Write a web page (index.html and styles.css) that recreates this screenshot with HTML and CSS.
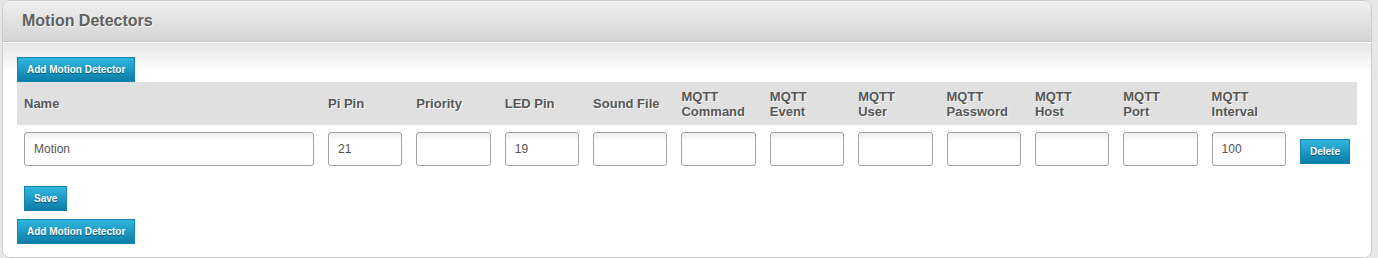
FILE: index.html
```html
<!DOCTYPE html>
<html lang="en">
<head>
    <meta charset="UTF-8">
    <title>Motion Detectors</title>
    <link rel="stylesheet" href="styles.css">
</head>
<body>
    <div class="panel">
        <div class="panel-header">Motion Detectors</div>
        <div class="panel-body">
            <button class="btn">Add Motion Detector</button>

            <table class="detectors">
                <colgroup>
                    <col class="col-name">
                    <col span="11">
                    <col class="col-action">
                </colgroup>
                <thead>
                    <tr>
                        <th>Name</th>
                        <th>Pi Pin</th>
                        <th>Priority</th>
                        <th>LED Pin</th>
                        <th>Sound File</th>
                        <th>MQTT<br>Command</th>
                        <th>MQTT<br>Event</th>
                        <th>MQTT<br>User</th>
                        <th>MQTT<br>Password</th>
                        <th>MQTT<br>Host</th>
                        <th>MQTT<br>Port</th>
                        <th>MQTT<br>Interval</th>
                        <th></th>
                    </tr>
                </thead>
                <tbody>
                    <tr>
                        <td><input type="text" value="Motion"></td>
                        <td><input type="text" value="21"></td>
                        <td><input type="text"></td>
                        <td><input type="text" value="19"></td>
                        <td><input type="text"></td>
                        <td><input type="text"></td>
                        <td><input type="text"></td>
                        <td><input type="text"></td>
                        <td><input type="password"></td>
                        <td><input type="text"></td>
                        <td><input type="text"></td>
                        <td><input type="text" value="100"></td>
                        <td><button class="btn btn-delete">Delete</button></td>
                    </tr>
                </tbody>
            </table>

            <div class="save-row">
                <button class="btn">Save</button>
            </div>
            <button class="btn">Add Motion Detector</button>
        </div>
    </div>
</body>
</html>
```

FILE: styles.css
```css
body {
    font-family: Arial, "Liberation Sans", sans-serif;
    background-color: #e7e7e7;
    margin: 0;
    padding: 0 0 0 2px;
}
.panel {
    width: 1370px;
    box-sizing: border-box;
    background-color: #fff;
    border: 1px solid #cbcbcb;
    border-radius: 8px;
    overflow: hidden;
}
.panel-header {
    height: 40px;
    line-height: 40px;
    padding: 0 19px;
    font-size: 16px;
    font-weight: bold;
    color: #606060;
    text-shadow: 1px 1px 0 #f4f4f4;
    background: linear-gradient(#efefef, #d5d5d5);
    border-bottom: 1px solid #c6c6c6;
}
.panel-body {
    border-top: 1px solid #fff;
    padding: 14px 14px 13px;
    background: linear-gradient(#e6e6e6, #fff 30px);
}
.btn {
    display: inline-block;
    height: 25px;
    padding: 0 9px;
    border: 1px solid #1484ad;
    border-radius: 0;
    background: linear-gradient(#30b7df, #0b7ea8);
    color: #fff;
    font-family: Arial, "Liberation Sans", sans-serif;
    font-size: 10px;
    font-weight: bold;
    text-shadow: 0 1px 1px rgba(0, 0, 0, 0.45);
    cursor: pointer;
    vertical-align: top;
}
table.detectors {
    width: 1340px;
    border-collapse: collapse;
    table-layout: fixed;
}
.col-name {
    width: 304px;
}
.col-action {
    width: 64px;
}
.detectors th {
    background-color: #e0e0e0;
    color: #575757;
    font-size: 13px;
    font-weight: bold;
    text-align: left;
    line-height: 15px;
    height: 43px;
    padding: 0 7px;
    box-sizing: border-box;
    text-shadow: 1px 1px 0 #fafafa;
    vertical-align: middle;
}
.detectors td {
    padding: 7px;
    vertical-align: middle;
}
.detectors input {
    width: 100%;
    height: 34px;
    box-sizing: border-box;
    border: 1px solid #a3a3a3;
    border-radius: 3px;
    padding: 0 9px;
    background: linear-gradient(#ececec, #fff 8px);
    font-family: Arial, "Liberation Sans", sans-serif;
    font-size: 12px;
    color: #555;
    display: block;
}
.btn-delete {
    margin-top: 4px;
    vertical-align: middle;
}
.save-row {
    padding: 13px 7px 8px;
}
```
